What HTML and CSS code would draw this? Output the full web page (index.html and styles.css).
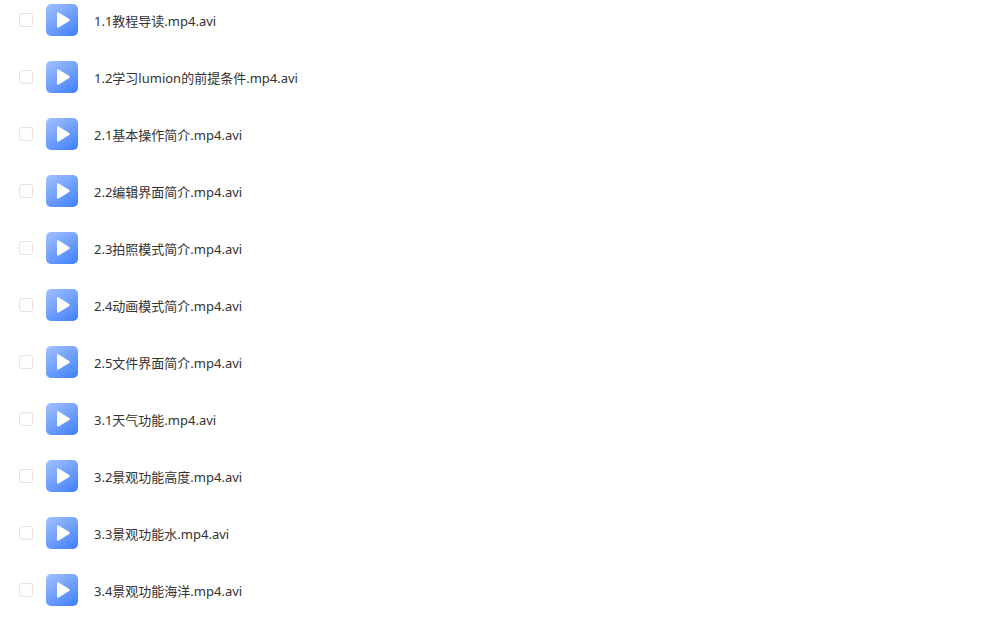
FILE: index.html
```html
<!DOCTYPE html>
<html>
<head>
    <meta charset="UTF-8">
    <title>File List</title>
    <link rel="stylesheet" href="styles.css">
</head>
<body>

    <svg class="defs" width="0" height="0">
        <defs>
            <linearGradient id="fileGrad" x1="0.15" y1="0" x2="0.85" y2="1">
                <stop offset="0" stop-color="#9dbdff"/>
                <stop offset="1" stop-color="#4583fb"/>
            </linearGradient>
        </defs>
    </svg>

    <div class="file-list">
        <div class="file-row">
            <span class="check"></span>
            <svg class="file-icon" viewBox="0 0 32 32"><rect width="32" height="32" rx="5" fill="url(#fileGrad)"/><path d="M11 9.5Q11 7.8 12.6 8.6L23.2 15Q24.6 16 23.2 17L12.6 23.4Q11 24.2 11 22.5Z" fill="#fff"/></svg>
            <span class="file-name">1.1教程导读.mp4.avi</span>
        </div>
        <div class="file-row">
            <span class="check"></span>
            <svg class="file-icon" viewBox="0 0 32 32"><rect width="32" height="32" rx="5" fill="url(#fileGrad)"/><path d="M11 9.5Q11 7.8 12.6 8.6L23.2 15Q24.6 16 23.2 17L12.6 23.4Q11 24.2 11 22.5Z" fill="#fff"/></svg>
            <span class="file-name">1.2学习lumion的前提条件.mp4.avi</span>
        </div>
        <div class="file-row">
            <span class="check"></span>
            <svg class="file-icon" viewBox="0 0 32 32"><rect width="32" height="32" rx="5" fill="url(#fileGrad)"/><path d="M11 9.5Q11 7.8 12.6 8.6L23.2 15Q24.6 16 23.2 17L12.6 23.4Q11 24.2 11 22.5Z" fill="#fff"/></svg>
            <span class="file-name">2.1基本操作简介.mp4.avi</span>
        </div>
        <div class="file-row">
            <span class="check"></span>
            <svg class="file-icon" viewBox="0 0 32 32"><rect width="32" height="32" rx="5" fill="url(#fileGrad)"/><path d="M11 9.5Q11 7.8 12.6 8.6L23.2 15Q24.6 16 23.2 17L12.6 23.4Q11 24.2 11 22.5Z" fill="#fff"/></svg>
            <span class="file-name">2.2编辑界面简介.mp4.avi</span>
        </div>
        <div class="file-row">
            <span class="check"></span>
            <svg class="file-icon" viewBox="0 0 32 32"><rect width="32" height="32" rx="5" fill="url(#fileGrad)"/><path d="M11 9.5Q11 7.8 12.6 8.6L23.2 15Q24.6 16 23.2 17L12.6 23.4Q11 24.2 11 22.5Z" fill="#fff"/></svg>
            <span class="file-name">2.3拍照模式简介.mp4.avi</span>
        </div>
        <div class="file-row">
            <span class="check"></span>
            <svg class="file-icon" viewBox="0 0 32 32"><rect width="32" height="32" rx="5" fill="url(#fileGrad)"/><path d="M11 9.5Q11 7.8 12.6 8.6L23.2 15Q24.6 16 23.2 17L12.6 23.4Q11 24.2 11 22.5Z" fill="#fff"/></svg>
            <span class="file-name">2.4动画模式简介.mp4.avi</span>
        </div>
        <div class="file-row">
            <span class="check"></span>
            <svg class="file-icon" viewBox="0 0 32 32"><rect width="32" height="32" rx="5" fill="url(#fileGrad)"/><path d="M11 9.5Q11 7.8 12.6 8.6L23.2 15Q24.6 16 23.2 17L12.6 23.4Q11 24.2 11 22.5Z" fill="#fff"/></svg>
            <span class="file-name">2.5文件界面简介.mp4.avi</span>
        </div>
        <div class="file-row">
            <span class="check"></span>
            <svg class="file-icon" viewBox="0 0 32 32"><rect width="32" height="32" rx="5" fill="url(#fileGrad)"/><path d="M11 9.5Q11 7.8 12.6 8.6L23.2 15Q24.6 16 23.2 17L12.6 23.4Q11 24.2 11 22.5Z" fill="#fff"/></svg>
            <span class="file-name">3.1天气功能.mp4.avi</span>
        </div>
        <div class="file-row">
            <span class="check"></span>
            <svg class="file-icon" viewBox="0 0 32 32"><rect width="32" height="32" rx="5" fill="url(#fileGrad)"/><path d="M11 9.5Q11 7.8 12.6 8.6L23.2 15Q24.6 16 23.2 17L12.6 23.4Q11 24.2 11 22.5Z" fill="#fff"/></svg>
            <span class="file-name">3.2景观功能高度.mp4.avi</span>
        </div>
        <div class="file-row">
            <span class="check"></span>
            <svg class="file-icon" viewBox="0 0 32 32"><rect width="32" height="32" rx="5" fill="url(#fileGrad)"/><path d="M11 9.5Q11 7.8 12.6 8.6L23.2 15Q24.6 16 23.2 17L12.6 23.4Q11 24.2 11 22.5Z" fill="#fff"/></svg>
            <span class="file-name">3.3景观功能水.mp4.avi</span>
        </div>
        <div class="file-row">
            <span class="check"></span>
            <svg class="file-icon" viewBox="0 0 32 32"><rect width="32" height="32" rx="5" fill="url(#fileGrad)"/><path d="M11 9.5Q11 7.8 12.6 8.6L23.2 15Q24.6 16 23.2 17L12.6 23.4Q11 24.2 11 22.5Z" fill="#fff"/></svg>
            <span class="file-name">3.4景观功能海洋.mp4.avi</span>
        </div>
    </div>

</body>
</html>
```

FILE: styles.css
```css
html, body {
    height: 100%;
    overflow: hidden;
}

body {
    margin: 0;
    background-color: #fff;
    font-family: "Noto Sans", "Noto Sans CJK SC", sans-serif;
    font-size: 13px;
    color: #333;
}

.defs {
    display: block;
}

.file-list {
    display: flex;
    flex-direction: column;
    gap: 25px;
    padding: 4px 0 0 19px;
}

.file-row {
    display: flex;
    align-items: center;
    height: 32px;
}

.check {
    width: 14px;
    height: 14px;
    box-sizing: border-box;
    border: 1px solid #e3e3e3;
    border-radius: 3px;
    background-color: #fff;
}

.file-icon {
    width: 32px;
    height: 32px;
    margin-left: 13px;
}

.file-name {
    margin-left: 16px;
    white-space: nowrap;
}
```
